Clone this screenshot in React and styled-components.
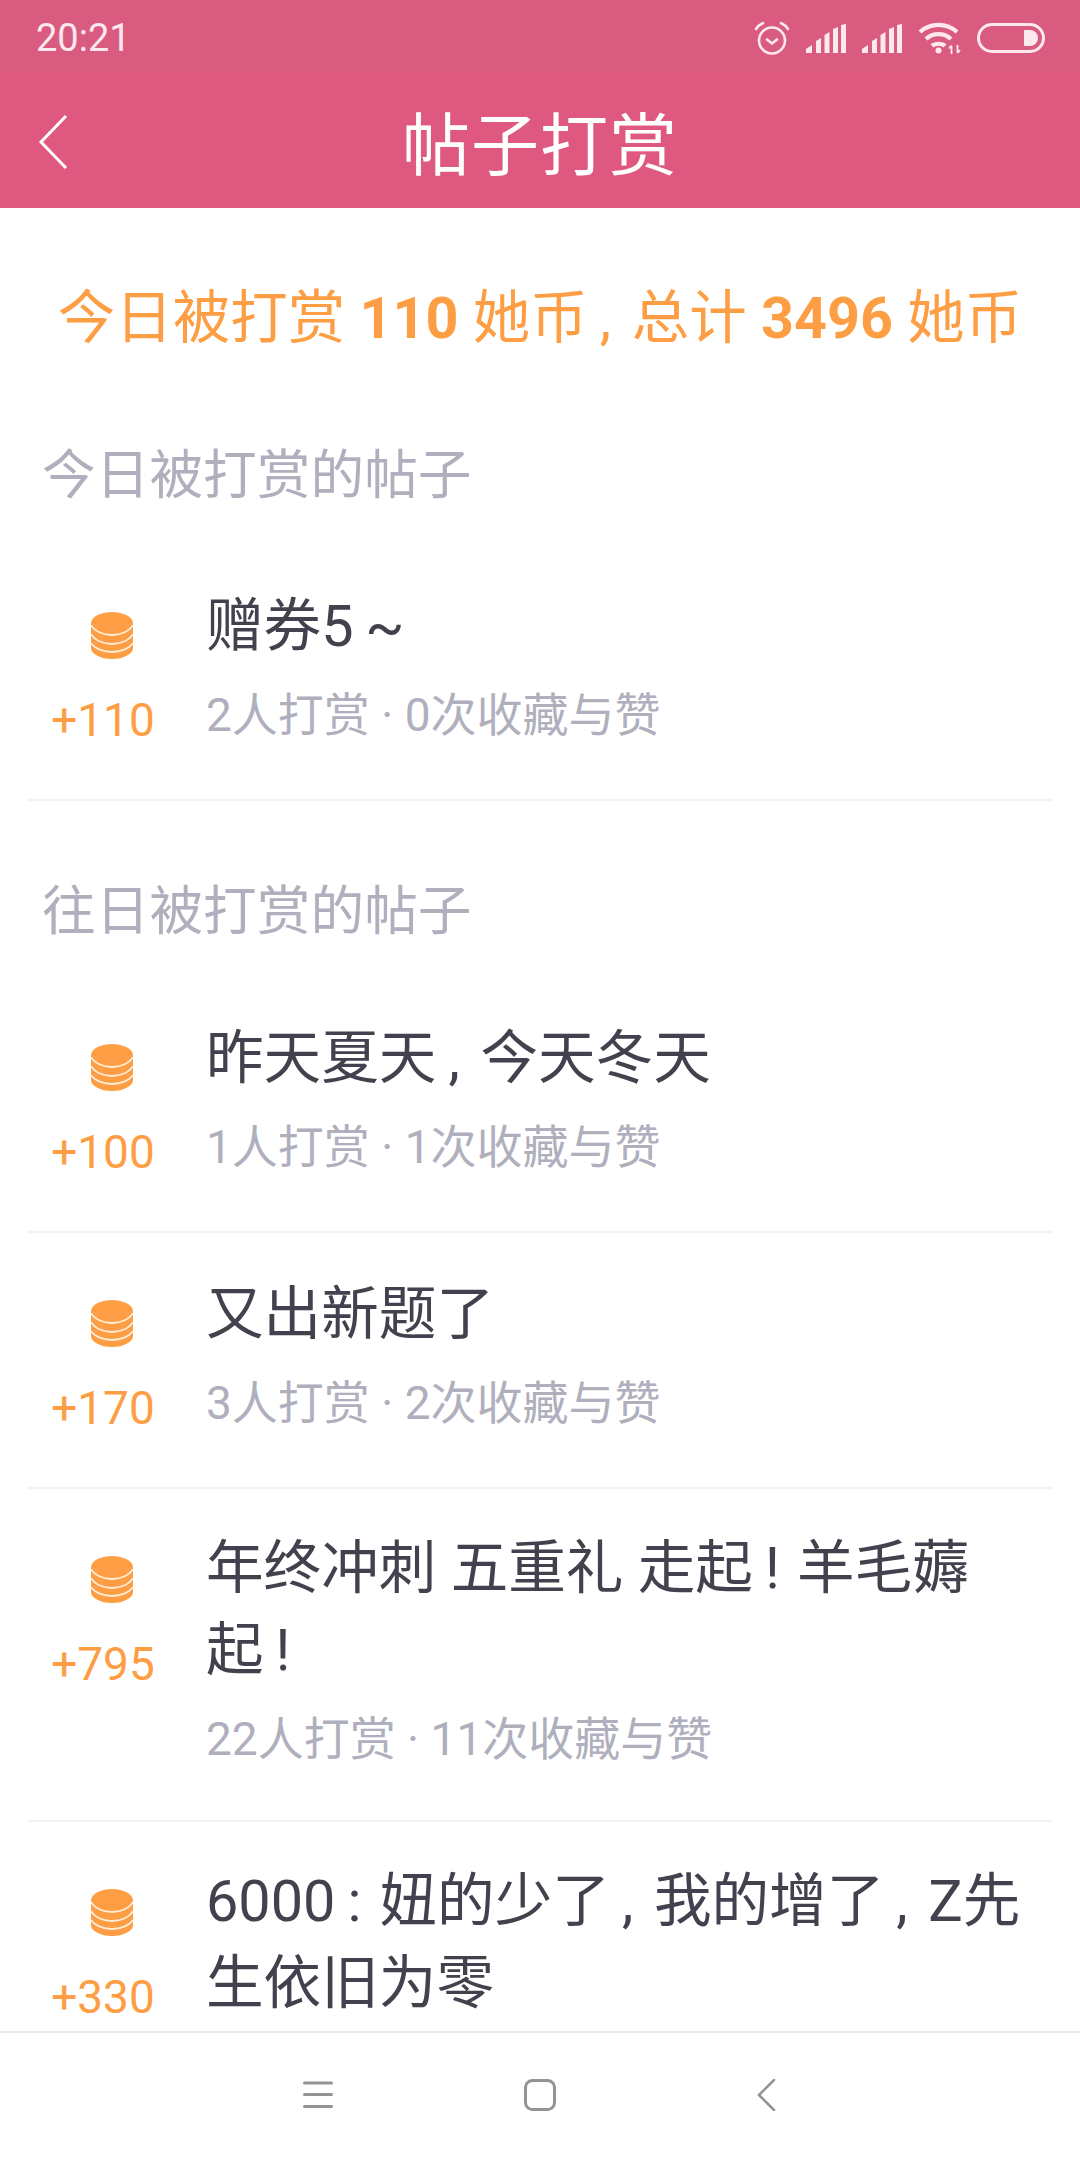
import React from "react";
import styled, { createGlobalStyle } from "styled-components";

const GlobalStyle = createGlobalStyle`
  html, body {
    margin: 0;
    padding: 0;
    background: #fff;
  }
  body {
    font-family: Roboto, "Noto Sans CJK SC", sans-serif;
  }
`;

const ORANGE = "#fd9e45";

const Page = styled.div`
  width: 1080px;
  height: 2160px;
  display: flex;
  flex-direction: column;
  overflow: hidden;
  background: #fff;
`;

const StatusBar = styled.div`
  height: 72px;
  flex: none;
  display: flex;
  align-items: center;
  justify-content: space-between;
  padding: 4px 35px 0 36px;
  box-sizing: border-box;
  background: #d95c80;
  color: #fde8ef;
  font-size: 38px;
`;

const StatusIcons = styled.div`
  display: flex;
  align-items: center;
  gap: 16px;
`;

const Header = styled.div`
  height: 136px;
  flex: none;
  position: relative;
  display: flex;
  align-items: center;
  justify-content: center;
  background: #df587f;
  color: #fff;
  font-size: 68px;
  letter-spacing: 1px;
`;

const BackButton = styled.svg`
  position: absolute;
  left: 38px;
  top: 42px;
`;

const Content = styled.div`
  flex: 1;
  min-height: 0;
  overflow: hidden;
`;

const Summary = styled.div`
  margin-top: 78px;
  text-align: center;
  color: ${ORANGE};
  font-size: 57.5px;
  line-height: 66px;
  white-space: nowrap;
  b {
    font-weight: 700;
  }
`;

const SectionTitle = styled.div`
  padding-left: 42px;
  color: #afafbd;
  font-size: 53.7px;
  line-height: 70px;
  margin: ${(p) => p.$top}px 0 ${(p) => p.$bottom}px;
`;

const Row = styled.div`
  margin: 0 28px;
  display: flex;
  border-bottom: 2px solid #f3f3f5;
`;

const Reward = styled.div`
  width: 150px;
  flex: none;
  display: flex;
  flex-direction: column;
  align-items: center;
  padding-top: 67px;
  color: ${ORANGE};
  font-size: 46px;
  line-height: 50px;
  gap: 36px;
`;

const CoinIcon = styled.svg`
  margin-left: 18px;
`;

const Body = styled.div`
  margin-left: 28px;
  flex: 1;
  min-width: 0;
  padding: ${(p) => (p.$wrapped ? "39px 0 53px" : "41px 0 56px")};
`;

const PostTitle = styled.div`
  color: #42424e;
  font-size: 57.6px;
  line-height: 82px;
`;

// punctuation in the reference is narrower than a full CJK cell
const Mark = styled.span`
  display: inline-block;
  width: 44px;
  padding-left: 12px;
  box-sizing: border-box;
  text-align: left;
`;

const Meta = styled.div`
  margin-top: 19px;
  color: #afafbd;
  font-size: 46px;
  line-height: 56px;
`;

const NavBar = styled.div`
  height: 129px;
  flex: none;
  display: flex;
  align-items: center;
  justify-content: center;
  gap: 190px;
  border-top: 2px solid #e8e8ea;
  background: #fff;
  box-sizing: border-box;
  padding-bottom: 3px;
`;

const Alarm = () => (
  <svg width="36" height="34" viewBox="0 0 36 34" fill="none" stroke="#fde8ef" strokeWidth="2.6">
    <circle cx="18" cy="19.500" r="13" />
    <path d="M13 18.500l5 4 5-4" strokeLinecap="round" strokeLinejoin="round" />
    <path d="M2 8C3.500 5.500 6 3.500 9 2M34 8C32.500 5.500 30 3.500 27 2" strokeLinecap="round" />
  </svg>
);

const Signal = () => (
  <svg width="40" height="29" viewBox="0 0 40 29" fill="#fde8ef">
    <path d="M0 29v-4l6-4v8zM10 29V17l5-3v15zM18.500 29V11l5-3v21zM27 29V5l5-2v26zM35 29V1l5-1v29z" />
  </svg>
);

const Wifi = () => (
  <svg width="43" height="32" viewBox="0 0 43 32" fill="none" stroke="#fde8ef" strokeWidth="4.200">
    <path d="M2 10C12 0.500 29 0.500 39 10" />
    <path d="M8 17C15 10.500 26 10.500 33 17" />
    <path d="M14 24C17 21 24 21 27 24" />
    <circle cx="20.500" cy="28.500" r="3" fill="#fde8ef" stroke="none" />
    <path d="M33.500 32v-8M31 26.500l2.500-3M39.500 23v8M39.500 31l2.500-3" strokeWidth="1.800" />
  </svg>
);

const Battery = () => (
  <svg width="68" height="30" viewBox="0 0 68 30">
    <rect x="1.500" y="1.500" width="65" height="27" rx="13.500" fill="none" stroke="#fde8ef" strokeWidth="3" />
    <path d="M47 7h6a8 8 0 0 1 0 16h-6z" fill="#fde8ef" />
  </svg>
);

const Coin = () => (
  <CoinIcon width="42" height="47" viewBox="0 0 42 47">
    <ellipse cx="21" cy="11.500" rx="21" ry="11.500" fill={ORANGE} />
    <path d="M0 11.500V36c0 6 9.400 11 21 11s21-5 21-11V11.500z" fill={ORANGE} />
    <path
      d="M0 13C3 19 12 23 21 23S39 19 42 13M0 22C3 28 12 32 21 32S39 28 42 22M0 31C3 36 12 40 21 40S39 36 42 31"
      fill="none"
      stroke="#ffeeda"
      strokeWidth="1.800"
    />
  </CoinIcon>
);

function PostRow({ amount, title, meta, wrapped }) {
  return (
    <Row>
      <Reward>
        <Coin />
        {amount}
      </Reward>
      <Body $wrapped={wrapped}>
        <PostTitle>{title}</PostTitle>
        {meta && <Meta>{meta}</Meta>}
      </Body>
    </Row>
  );
}

export default function App() {
  return (
    <Page>
      <GlobalStyle />
      <StatusBar>
        20:21
        <StatusIcons>
          <Alarm />
          <Signal />
          <Signal />
          <Wifi />
          <Battery />
        </StatusIcons>
      </StatusBar>
      <Header>
        <BackButton width="36" height="56" viewBox="0 0 36 56" fill="none" stroke="#fff" strokeWidth="3">
          <path d="M28 2L3 28l25 26" />
        </BackButton>
        帖子打赏
      </Header>
      <Content>
        <Summary>
          今日被打赏 <b>110</b> 她币<Mark>,</Mark>总计 <b>3496</b> 她币
        </Summary>
        <SectionTitle $top={89} $bottom={34}>今日被打赏的帖子</SectionTitle>
        <PostRow amount="+110" title={"赠券5\u2009~"} meta="2人打赏 · 0次收藏与赞" />
        <SectionTitle $top={76} $bottom={30}>往日被打赏的帖子</SectionTitle>
        <PostRow
          amount="+100"
          title={<>昨天夏天<Mark>,</Mark>今天冬天</>}
          meta="1人打赏 · 1次收藏与赞"
        />
        <PostRow amount="+170" title="又出新题了" meta="3人打赏 · 2次收藏与赞" />
        <PostRow
          wrapped
          amount="+795"
          title={<>年终冲刺 五重礼 走起<Mark>!</Mark>羊毛薅<br />起<Mark>!</Mark></>}
          meta="22人打赏 · 11次收藏与赞"
        />
        <PostRow
          wrapped
          amount="+330"
          title={<>6000<Mark>:</Mark>妞的少了<Mark>,</Mark>我的增了<Mark>,</Mark>Z先<br />生依旧为零</>}
        />
      </Content>
      <NavBar>
        <svg width="32" height="32" viewBox="0 0 32 32" fill="#949494">
          <rect x="1" y="2.500" width="30" height="3" rx="1.500" />
          <rect x="1" y="14" width="30" height="3" rx="1.500" />
          <rect x="1" y="26" width="30" height="3" rx="1.500" />
        </svg>
        <svg width="32" height="32" viewBox="0 0 32 32" fill="none" stroke="#949494" strokeWidth="3">
          <rect x="1.500" y="1.500" width="29" height="29" rx="7" />
        </svg>
        <svg width="32" height="32" viewBox="0 0 32 32" fill="none" stroke="#949494" strokeWidth="2.600">
          <path d="M28 1L13 16l15 15" strokeLinecap="round" />
        </svg>
      </NavBar>
    </Page>
  );
}
